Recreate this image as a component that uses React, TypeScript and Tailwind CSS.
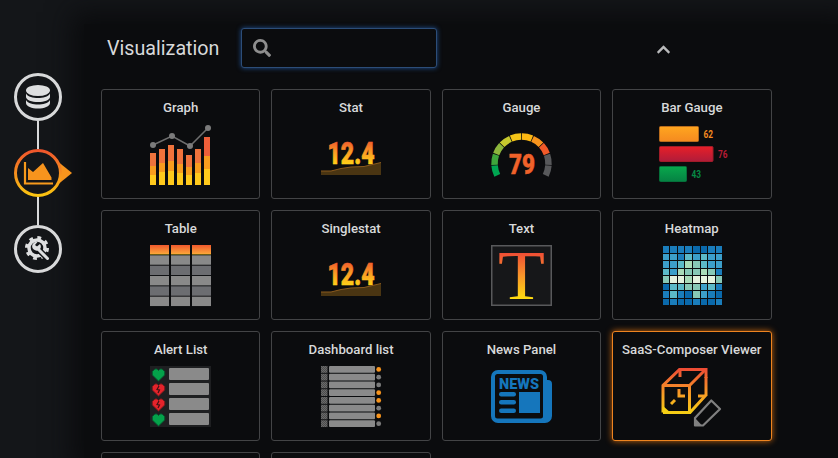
import { FaChevronUp, FaSearch } from "react-icons/fa";

const font = { fontFamily: "Roboto, sans-serif" };

function Defs() {
  return (
    <svg width="0" height="0" className="absolute">
      <defs>
        <linearGradient id="statText" gradientUnits="userSpaceOnUse" x1="0" y1="17" x2="0" y2="40">
          <stop offset="0" stopColor="#f0592d" />
          <stop offset="0.5" stopColor="#fa9d24" />
          <stop offset="1" stopColor="#ffd018" />
        </linearGradient>
        <linearGradient id="bigT" gradientUnits="userSpaceOnUse" x1="0" y1="7" x2="0" y2="54">
          <stop offset="0" stopColor="#ee4a35" />
          <stop offset="0.5" stopColor="#f9952a" />
          <stop offset="1" stopColor="#ffdd10" />
        </linearGradient>
        <linearGradient id="cube" gradientUnits="userSpaceOnUse" x1="0" y1="2" x2="0" y2="48">
          <stop offset="0" stopColor="#ee4a35" />
          <stop offset="0.55" stopColor="#f79a26" />
          <stop offset="1" stopColor="#f5cf14" />
        </linearGradient>
        <linearGradient id="ring" x1="0" y1="0" x2="0" y2="1">
          <stop offset="0" stopColor="#f0562c" />
          <stop offset="1" stopColor="#fbc511" />
        </linearGradient>
        <linearGradient id="amber" x1="0" y1="0" x2="0" y2="1">
          <stop offset="0" stopColor="#ffa61f" />
          <stop offset="1" stopColor="#f58a20" />
        </linearGradient>
        <linearGradient id="red" x1="0" y1="0" x2="0" y2="1">
          <stop offset="0" stopColor="#e71f28" />
          <stop offset="1" stopColor="#b01c3a" />
        </linearGradient>
        <linearGradient id="green" x1="0" y1="0" x2="0" y2="1">
          <stop offset="0" stopColor="#08a84c" />
          <stop offset="1" stopColor="#058243" />
        </linearGradient>
        <linearGradient id="head" x1="0" y1="0" x2="0" y2="1">
          <stop offset="0" stopColor="#f0592d" />
          <stop offset="0.9" stopColor="#fba23a" />
          <stop offset="1" stopColor="#ffd51c" />
        </linearGradient>
        <pattern id="check" width="2" height="2" patternUnits="userSpaceOnUse">
          <rect width="2" height="2" fill="#4c4c4c" />
          <rect width="1" height="1" fill="#6a6a6a" />
          <rect x="1" y="1" width="1" height="1" fill="#6a6a6a" />
        </pattern>
      </defs>
    </svg>
  );
}

function Box({ children, w = 61 }: { children: React.ReactNode; w?: number }) {
  return (
    <svg width={w} height={61} viewBox={`0 0 ${w} 61`} className="mt-[8px] block overflow-visible">
      {children}
    </svg>
  );
}

function GraphIcon() {
  const bars = [
    [29, 42, 51],
    [25, 39, 48],
    [21, 37, 47],
    [25, 40, 49],
    [31, 43, 51],
    [25, 39, 49],
    [13, 32, 45],
  ];
  return (
    <Box>
      {bars.map(([a, b, c], i) => (
        <g key={i}>
          <rect x={i * 9} y={a} width={6} height={b - a} fill={i === 6 ? "#ee5f3a" : "#ef733c"} />
          <rect x={i * 9} y={b} width={6} height={c - b} fill="#f89c1e" />
          <rect x={i * 9} y={c} width={6} height={61 - c} fill="#ffc91c" />
        </g>
      ))}
      <polyline points="3,21 22,12 40,22 58,4" fill="none" stroke="#6f6f6f" strokeWidth="1.5" />
      {[[3, 21], [22, 12], [40, 22], [58, 4]].map(([x, y]) => (
        <circle key={x} cx={x} cy={y} r="3" fill="#7b7b7b" />
      ))}
    </Box>
  );
}

function StatIcon() {
  return (
    <Box>
      <text x="6.500" y="40" fontSize="32" fontWeight="900" textLength="47" lengthAdjust="spacingAndGlyphs" fill="url(#statText)" stroke="url(#statText)" strokeWidth="0.700" style={font}>
        12.4
      </text>
      <path d="M0 47H10L20 44.500L30 43L43 42.500L60 38.500V51H0Z" fill="#4a3512" />
      <path d="M0 47H10L20 44.500L30 43L43 42.500L60 38.500" fill="none" stroke="#8a5a1d" strokeWidth="1" />
    </Box>
  );
}

function arc(a0: number, a1: number, r: number) {
  const cx = 30.5;
  const cy = 39.5;
  const p = (a: number) => {
    const t = (a * Math.PI) / 180;
    return `${(cx + r * Math.sin(t)).toFixed(2)} ${(cy - r * Math.cos(t)).toFixed(2)}`;
  };
  return `M${p(a0)}A${r} ${r} 0 0 1 ${p(a1)}`;
}

function GaugeIcon() {
  const colors = ["#00a651", "#3fa63c", "#8cb63c", "#c6c92e", "#f5c518", "#fdb913", "#f8941d", "#f15a29", "#58595b", "#58595b"];
  return (
    <Box>
      {colors.map((c, i) => (
        <path key={i} d={arc(-117 + i * 23.4 + 0.8, -117 + (i + 1) * 23.4 - 0.8, 27)} fill="none" stroke={c} strokeWidth="6.500" />
      ))}
      <text x="18" y="50" fontSize="28" fontWeight="900" textLength="26" lengthAdjust="spacingAndGlyphs" fill="#f0622a" stroke="#f0622a" strokeWidth="0.500" style={font}>
        79
      </text>
    </Box>
  );
}

function BarGaugeIcon() {
  const rows = [
    { w: 39, fill: "url(#amber)", c: "#f58a20", v: "62", s: "#b86c1c" },
    { w: 53.500, fill: "url(#red)", c: "#b81c34", v: "76", s: "#a01c28" },
    { w: 27, fill: "url(#green)", c: "#068a45", v: "43", s: "#05703a" },
  ];
  return (
    <Box w={66}>
      {rows.map((r, i) => (
        <g key={r.v}>
          <rect x="0.500" y={2.500 + i * 20} width={r.w} height={15} rx="1" fill={r.fill} stroke={r.s} strokeWidth="1" />
          <text x={r.w + 5.500} y={14 + i * 20} fontSize="10" fontWeight="700" textLength="9.500" lengthAdjust="spacingAndGlyphs" fill={r.c} style={font}>
            {r.v}
          </text>
        </g>
      ))}
    </Box>
  );
}

function TableIcon() {
  return (
    <Box>
      {[0, 21, 42].map((x) =>
        [0, 1, 2, 3, 4, 5].map((r) => (
          <rect
            key={`${x}-${r}`}
            x={x}
            y={r * 10.330}
            width={19}
            height={9.400}
            fill={r === 0 ? "url(#head)" : r % 2 === 1 ? "#898989" : "#6c6d71"}
          />
        )),
      )}
    </Box>
  );
}

function TextIcon() {
  return (
    <Box>
      <rect x="0.750" y="0.750" width="59.500" height="59.500" fill="#161719" stroke="#58595b" strokeWidth="1.500" />
      <text
        x="7"
        y="54"
        fontSize="70"
        textLength="47"
        lengthAdjust="spacingAndGlyphs"
        fill="url(#bigT)"
        style={{ fontFamily: '"Liberation Serif", serif' }}
      >
        T
      </text>
    </Box>
  );
}

function HeatmapIcon() {
  const pal: Record<string, string> = {
    d: "#0a69ab",
    b: "#1a7dbb",
    m: "#3c9fca",
    t: "#5bb9c8",
    g: "#87c8b6",
    l: "#a9dbb8",
    w: "#e4f2de",
  };
  const rows = ["bbbbddbb", "mmbtmtmm", "mmtlgtmm", "tmlgglgb", "gwwlwwwg", "dttggmtb", "btbdgmbd", "dbddbddb"];
  return (
    <Box>
      {rows.map((row, y) =>
        row.split("").map((c, x) => (
          <rect key={`${x}-${y}`} x={1.500 + x * 7.600} y={1 + y * 7.550} width="6.600" height="6.600" fill={pal[c]} shapeRendering="crispEdges" />
        )),
      )}
    </Box>
  );
}

function Heart({ y, broken }: { y: number; broken?: boolean }) {
  const main = broken ? "#e5232b" : "#04a24a";
  const edge = broken ? "#7c1a1e" : "#07572f";
  return (
    <g transform={`translate(1.500 ${y})`}>
      <path d="M7 13L0.800 7V3.500L3.500 1H5.500L7 2.500L8.500 1H10.500L13.200 3.500V7Z" fill={main} stroke={edge} strokeWidth="1" />
      {broken && <path d="M7.500 3L5.500 6.500L8 7L6.500 10" fill="none" stroke="#3d1214" strokeWidth="1.200" />}
    </g>
  );
}

function AlertListIcon() {
  return (
    <Box>
      <rect width="61" height="61" fill="#1e1f21" />
      {[false, true, true, false].map((b, i) => (
        <g key={i}>
          <Heart y={2 + i * 15} broken={b} />
          <rect x="19" y={2 + i * 15} width="40" height="12" rx="1" fill="#8a8a8a" />
        </g>
      ))}
    </Box>
  );
}

function DashListIcon() {
  const dots = ["#f7941d", "#7b7b7b", "#7b7b7b", "#f7941d", "#f7941d", "#7b7b7b", "#f7941d", "#7b7b7b"];
  return (
    <Box>
      {dots.map((c, i) => (
        <g key={i}>
          <rect x="0" y={i * 7.750} width="6.500" height="6.800" fill="url(#check)" />
          <rect x="8" y={i * 7.750} width="46" height="6.800" rx="1" fill="#8a8a8a" />
          <circle cx="57.700" cy={3.400 + i * 7.750} r="2.400" fill={c} />
        </g>
      ))}
    </Box>
  );
}

function NewsIcon() {
  return (
    <Box>
      <path d="M0 11a7 7 0 0 1 7-7H49a7 7 0 0 1 7 7v3h1a4 4 0 0 1 4 4V50a7 7 0 0 1-7 7H7a7 7 0 0 1-7-7Z" fill="#1576bc" />
      <rect x="4" y="8" width="48" height="44.500" rx="2.500" fill="#0b0c0e" />
      <text x="8" y="22.500" fontSize="15" fontWeight="900" textLength="40" lengthAdjust="spacingAndGlyphs" fill="#1576bc" style={font}>
        NEWS
      </text>
      <rect x="8" y="26" width="17" height="4.500" rx="2.200" fill="#1576bc" />
      <rect x="8" y="34" width="17" height="4.500" rx="2.200" fill="#1576bc" />
      <rect x="8" y="42.500" width="17" height="4.500" rx="2.200" fill="#1576bc" />
      <rect x="28" y="26" width="21" height="21" fill="#1576bc" />
    </Box>
  );
}

function ComposerIcon() {
  return (
    <Box>
      <g fill="none" stroke="url(#cube)" strokeWidth="3">
        <path d="M2 46.500V19.500L18.500 3.500H45V12" />
        <path d="M45 11V30" />
        <path d="M2 19.500H28.500L44.500 3.500" />
        <path d="M28.500 19.500V46.500" />
        <path d="M45 29L29 46.500H2" />
        <path d="M19 4V11" />
        <path d="M18 23V30H24" />
        <path d="M14 34L10 38" />
        <path d="M37 30H43" />
      </g>
      <path d="M2 40V47H10L2 40Z" fill="#f5cf14" />
      <path d="M34 52L50.300 34.500L59 43L42 59.500H34Z" fill="none" stroke="#808080" strokeWidth="2.200" strokeLinejoin="round" />
      <path d="M34 52L41 59.500H34Z" fill="#808080" />
    </Box>
  );
}

const panels: { title: string; icon?: React.ReactNode; active?: boolean }[] = [
  { title: "Graph", icon: <GraphIcon /> },
  { title: "Stat", icon: <StatIcon /> },
  { title: "Gauge", icon: <GaugeIcon /> },
  { title: "Bar Gauge", icon: <BarGaugeIcon /> },
  { title: "Table", icon: <TableIcon /> },
  { title: "Singlestat", icon: <StatIcon /> },
  { title: "Text", icon: <TextIcon /> },
  { title: "Heatmap", icon: <HeatmapIcon /> },
  { title: "Alert List", icon: <AlertListIcon /> },
  { title: "Dashboard list", icon: <DashListIcon /> },
  { title: "News Panel", icon: <NewsIcon /> },
  { title: "SaaS-Composer Viewer", icon: <ComposerIcon />, active: true },
  { title: "" },
  { title: "" },
];

function Card({ title, icon, active }: { title: string; icon?: React.ReactNode; active?: boolean }) {
  return (
    <div
      className={
        active
          ? "flex h-[110px] flex-col items-center rounded-[3px] border border-[#ee8420] bg-[#0b0c0e] pt-[10px] shadow-[0_0_6px_#c8660f]"
          : "flex h-[110px] flex-col items-center rounded-[3px] border border-[#434446] bg-[#0b0c0e] pt-[10px]"
      }
    >
      <div className="h-[16px] whitespace-nowrap text-[13.2px] font-medium leading-[16px] text-[#d8d9da]">{title}</div>
      {icon}
    </div>
  );
}

function Sidebar() {
  return (
    <div className="relative z-10 flex w-[84px] shrink-0 flex-col items-start pl-[14px] pt-[73px]">
      <div className="flex h-[48px] w-[48px] items-center justify-center rounded-full border-[3px] border-[#d8d9da]">
        <svg width="26" height="24" viewBox="0 0 26 24" fill="#dedfe0">
          <ellipse cx="13" cy="5.500" rx="12" ry="5.500" />
          <path d="M1 8.500C3 12 8 13 13 13S23 12 25 8.500V12C25 15 19 17 13 17S1 15 1 12Z" />
          <path d="M1 15C3 18.500 8 19.500 13 19.500S23 18.500 25 15V18C25 21.500 19 23.500 13 23.500S1 21.500 1 18Z" />
        </svg>
      </div>
      <div className="ml-[23px] h-[28px] w-[2px] bg-[#d8d9da]" />
      <svg width="60" height="48" viewBox="0 0 60 48" className="block">
        <path d="M42 11L58 24L42 37Z" fill="#f7941d" />
        <circle cx="24" cy="24" r="22.500" fill="#141619" stroke="url(#ring)" strokeWidth="3" />
        <path d="M11 13V34.500H39" fill="none" stroke="#f79a1c" strokeWidth="2.200" />
        <path d="M14 30V19L19 23L29 14L37.500 28.500V31H14Z" fill="#f7941d" />
      </svg>
      <div className="ml-[23px] h-[28px] w-[2px] bg-[#d8d9da]" />
      <div className="flex h-[48px] w-[48px] items-center justify-center rounded-full border-[3px] border-[#d8d9da]">
        <svg width="26" height="26" viewBox="0 0 26 26" fill="none">
          <circle cx="12" cy="12" r="8" stroke="#dedfe0" strokeWidth="3.500" />
          <circle cx="12" cy="12" r="10.500" stroke="#dedfe0" strokeWidth="3" strokeDasharray="3.800 4.450" />
          <path d="M11 11L22 22" stroke="#141619" strokeWidth="6" />
          <path d="M12 12L22.500 22.500" stroke="#dedfe0" strokeWidth="3" strokeLinecap="round" />
          <path d="M7.500 8.500A4.500 4.500 0 0 0 14 14A4.500 4.500 0 0 0 15 8L12 10.500L10 9L12.500 6A4.500 4.500 0 0 0 7.500 8.500Z" fill="#dedfe0" />
        </svg>
      </div>
    </div>
  );
}

export default function App() {
  return (
    <div className="flex h-[458px] w-[838px] overflow-hidden bg-[#141619]" style={font}>
      <Defs />
      <Sidebar />
      <div className="mt-[24px] flex-1 bg-[#0b0c0e] pl-[17px] pt-[4px] shadow-[0_0_24px_12px_#0b0c0e]">
        <div className="flex h-[40px] items-center">
          <div className="w-[140px] pl-[6px] pt-[1px] text-[19.7px] text-[#d8d9da]">Visualization</div>
          <div className="flex h-[40px] w-[196px] items-center rounded-[3px] border border-[#2c4d78] bg-[#0b0c0e] pl-[11px] shadow-[0_0_5px_#1f4f8f]">
            <FaSearch className="h-[18px] w-[18px] shrink-0 text-[#8e8e8e]" />
            <input className="ml-2 w-full bg-transparent outline-none" />
          </div>
          <FaChevronUp className="ml-[219px] mt-[3px] h-[15px] w-[15px] text-[#b9babb]" />
        </div>
        <div className="mt-[21px] grid w-[670.5px] grid-cols-4 gap-[11px]">
          {panels.map((p, i) => (
            <Card key={i} title={p.title} icon={p.icon} active={p.active} />
          ))}
        </div>
      </div>
    </div>
  );
}
